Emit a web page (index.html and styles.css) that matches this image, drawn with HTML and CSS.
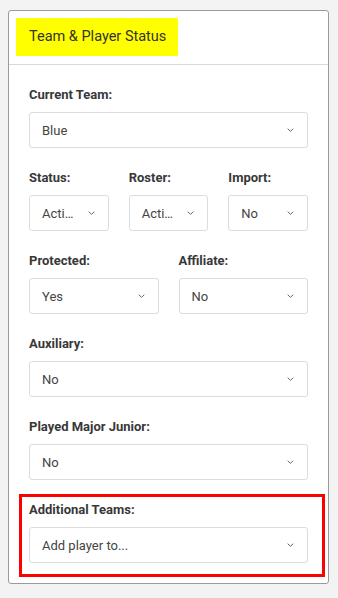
FILE: index.html
```html
<!DOCTYPE html>
<html>
    <head>
        <meta charset="utf-8">
        <link rel="stylesheet" href="styles.css">
    </head>
    <body>
        <div class="card">
            <div class="card-header">
                <span class="title">Team &amp; Player Status</span>
            </div>

            <div class="card-body">
                <div class="field">
                    <label>Current Team:</label>
                    <div class="select">
                        <span class="value">Blue</span>
                        <svg class="chev" width="7" height="4" viewBox="0 0 7 4"><polyline points="0.7,0.7 3.5,3.3 6.3,0.7" /></svg>
                    </div>
                </div>

                <div class="row three">
                    <div class="field">
                        <label>Status:</label>
                        <div class="select">
                            <span class="value">Active</span>
                            <svg class="chev" width="7" height="4" viewBox="0 0 7 4"><polyline points="0.7,0.7 3.5,3.3 6.3,0.7" /></svg>
                        </div>
                    </div>
                    <div class="field">
                        <label>Roster:</label>
                        <div class="select">
                            <span class="value">Active</span>
                            <svg class="chev" width="7" height="4" viewBox="0 0 7 4"><polyline points="0.7,0.7 3.5,3.3 6.3,0.7" /></svg>
                        </div>
                    </div>
                    <div class="field">
                        <label>Import:</label>
                        <div class="select">
                            <span class="value">No</span>
                            <svg class="chev" width="7" height="4" viewBox="0 0 7 4"><polyline points="0.7,0.7 3.5,3.3 6.3,0.7" /></svg>
                        </div>
                    </div>
                </div>

                <div class="row two">
                    <div class="field">
                        <label>Protected:</label>
                        <div class="select">
                            <span class="value">Yes</span>
                            <svg class="chev" width="7" height="4" viewBox="0 0 7 4"><polyline points="0.7,0.7 3.5,3.3 6.3,0.7" /></svg>
                        </div>
                    </div>
                    <div class="field">
                        <label>Affiliate:</label>
                        <div class="select">
                            <span class="value">No</span>
                            <svg class="chev" width="7" height="4" viewBox="0 0 7 4"><polyline points="0.7,0.7 3.5,3.3 6.3,0.7" /></svg>
                        </div>
                    </div>
                </div>

                <div class="field">
                    <label>Auxiliary:</label>
                    <div class="select">
                        <span class="value">No</span>
                        <svg class="chev" width="7" height="4" viewBox="0 0 7 4"><polyline points="0.7,0.7 3.5,3.3 6.3,0.7" /></svg>
                    </div>
                </div>

                <div class="field">
                    <label>Played Major Junior:</label>
                    <div class="select">
                        <span class="value">No</span>
                        <svg class="chev" width="7" height="4" viewBox="0 0 7 4"><polyline points="0.7,0.7 3.5,3.3 6.3,0.7" /></svg>
                    </div>
                </div>

                <!-- highlighted group -->
                <div class="field highlight">
                    <label>Additional Teams:</label>
                    <div class="select">
                        <span class="value">Add player to...</span>
                        <svg class="chev" width="7" height="4" viewBox="0 0 7 4"><polyline points="0.7,0.7 3.5,3.3 6.3,0.7" /></svg>
                    </div>
                </div>
            </div>
        </div>
    </body>
</html>
```

FILE: styles.css
```css
body {
    margin: 8px;
    background-color: #f3f3f3;
    font-family: Roboto, "Liberation Sans", sans-serif;
    color: #333;
}

.card {
    margin: 2px 1px 0 0;
    background-color: #fff;
    border: 1px solid #9a9a9a;
    border-radius: 3px;
}

.card-header {
    padding: 7px 7px 8px;
    border-bottom: 1px solid #d9d9d9;
}

.title {
    display: inline-block;
    background-color: #ffff00;
    padding: 0 12px 0 13px;
    height: 38px;
    line-height: 38px;
    font-size: 14.5px;
    color: #333;
}

.card-body {
    padding: 20px;
}

.field {
    margin-bottom: 20px;
    min-width: 0;
}

.row .field {
    margin-bottom: 0;
}

.row {
    display: grid;
    gap: 20px;
    margin-bottom: 20px;
}

.row.three {
    grid-template-columns: repeat(3, 1fr);
}

.row.two {
    grid-template-columns: repeat(2, 1fr);
}

label {
    display: block;
    font-size: 13px;
    font-weight: bold;
    line-height: 20px;
    margin-bottom: 7px;
    color: #383838;
}

.select {
    display: flex;
    align-items: center;
    height: 36px;
    box-sizing: border-box;
    padding: 0 13px 0 12px;
    border: 1px solid #dcdcdc;
    border-radius: 3px;
    background-color: #fff;
    font-size: 13px;
    color: #444;
}

.value {
    flex: 1;
    min-width: 0;
    white-space: nowrap;
    overflow: hidden;
    text-overflow: ellipsis;
}

.chev {
    flex: none;
    margin-left: 11px;
    fill: none;
    stroke: #666;
    stroke-width: 1;
}

.highlight {
    position: relative;
    margin-bottom: 0;
}

.highlight::after {
    content: "";
    position: absolute;
    top: -6px;
    left: -10px;
    right: -17px;
    bottom: -14px;
    border: 3px solid #ff0000;
    pointer-events: none;
}
```
